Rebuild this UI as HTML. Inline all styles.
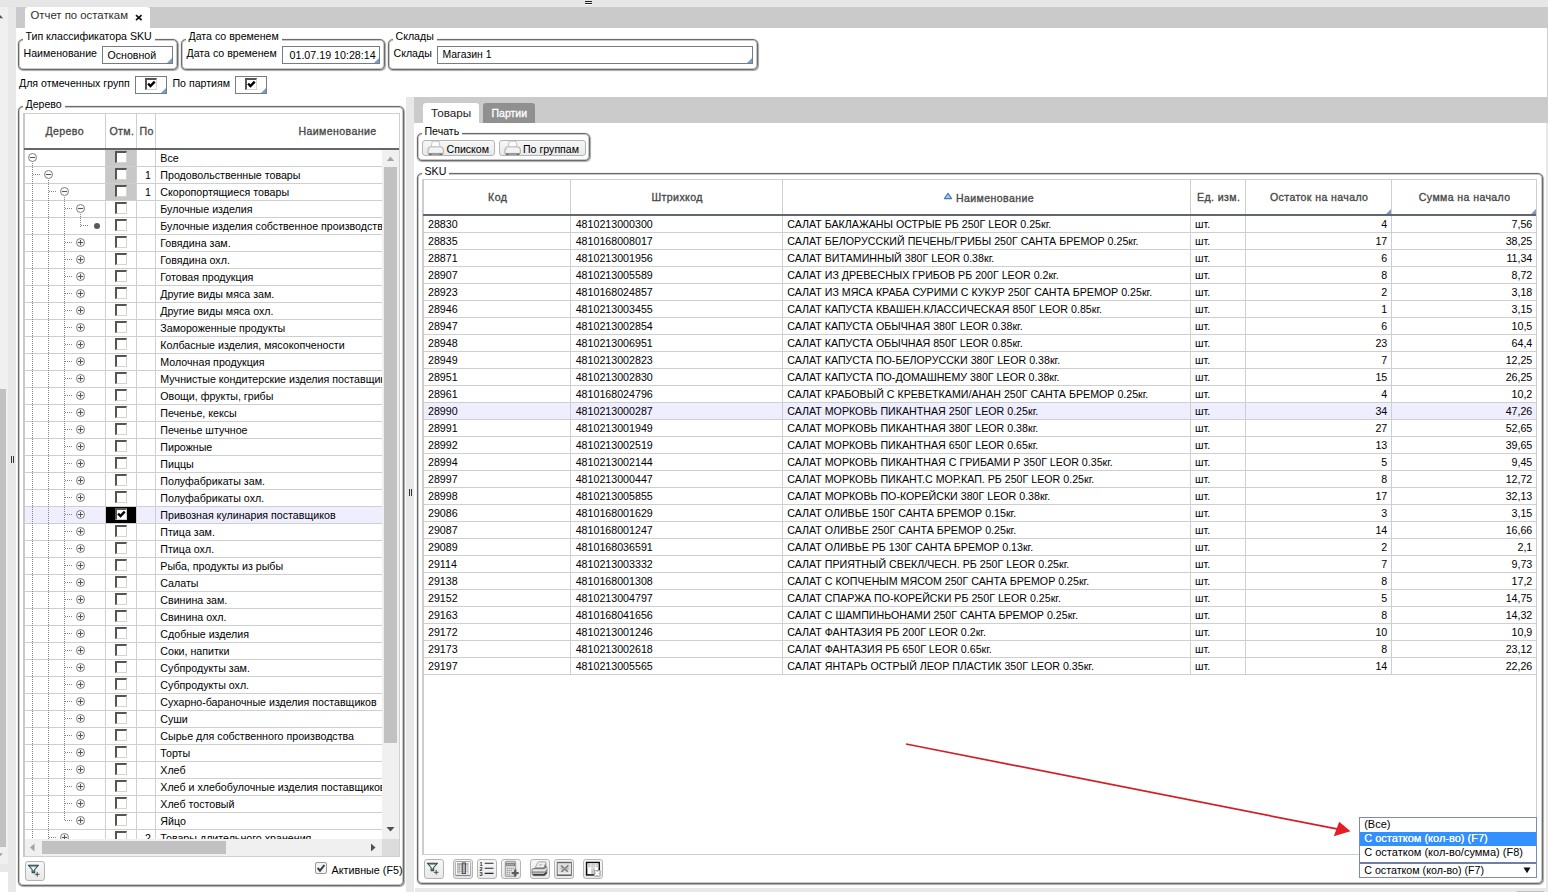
<!DOCTYPE html>
<html lang="ru"><head><meta charset="utf-8"><title>Отчет по остаткам</title><style>
*{box-sizing:border-box;margin:0;padding:0}
html,body{width:1548px;height:892px;overflow:hidden;background:#fff}
body{position:relative;font-family:"Liberation Sans",sans-serif;font-size:10.6px;color:#000;line-height:12px}
.a{position:absolute}
.t{position:absolute;white-space:nowrap;line-height:12px;height:12px}
.fs{position:absolute;border:1px solid #6c6c6c;border-radius:5px;box-shadow:inset 0 0 0 1px rgba(110,110,110,.38),0 0 1px rgba(70,70,70,.8),0.5px 1px 1px rgba(0,0,0,.3)}
.lg{position:absolute;background:#fff;white-space:nowrap;line-height:12px;height:12px;padding:0 3px 0 3px}
.inp{position:absolute;border:1px solid #767c86;background:#fff;overflow:hidden}
.inp:after,.tri:after{content:"";position:absolute;right:0;bottom:0;border-style:solid;border-width:0 0 5px 5px;border-color:transparent transparent #7a9cc8 transparent}
.cb{position:absolute;width:12px;height:12px;background:#fff;border-top:2px solid #555;border-left:2px solid #555;border-right:1px solid #d8d4cc;border-bottom:1px solid #d8d4cc}
.hd{position:absolute;font-weight:normal;color:#484848;-webkit-text-stroke:0.32px #484848;letter-spacing:0.38px;white-space:nowrap;line-height:12px;height:12px;text-align:center}
.vl{position:absolute;width:1px;background:#cfcfcf}
.hl{position:absolute;height:1px;background:#cfcfcf}
.btn{position:absolute;border:1px solid #b4b4b4;border-radius:3px;background:linear-gradient(#f7f7f7,#e9e9e9)}
.tt{font-size:10.66px}
.row{position:absolute;left:0;height:17px;border-bottom:1px solid #cfcfcf}
</style></head><body>
<div class="a" style="left:0px;top:0px;width:1548px;height:7px;background:#e6e6e6;"></div>
<div class="a" style="left:0px;top:7px;width:8px;height:857px;background:#f0f0f0;"></div>
<div class="a" style="left:0px;top:864px;width:8px;height:8px;background:#e8e8e8;"></div>
<div class="a" style="left:8px;top:7px;width:8px;height:885px;background:#e8e8e8;"></div>
<div class="a" style="left:16px;top:7px;width:1532px;height:21px;background:#cacaca;"></div>
<div class="a" style="left:0px;top:389px;width:6px;height:458px;background:#c1c1c1;"></div>
<svg class="a" style="left:0;top:12px" width="8" height="10"><path d="M0 3 L3.2 6.3 L0 6.3Z" fill="#555"/></svg>
<svg class="a" style="left:0;top:852px" width="8" height="8"><path d="M0 1.2 L3 1.2 L0 4.2Z" fill="#a0a0a0"/></svg>
<div class="a" style="left:10.5px;top:456px;width:1px;height:7px;background:#333;"></div>
<div class="a" style="left:13px;top:456px;width:1px;height:7px;background:#333;"></div>
<div class="a" style="left:585px;top:1px;width:7px;height:1px;background:#222;"></div>
<div class="a" style="left:585px;top:3px;width:7px;height:1px;background:#222;"></div>
<div class="a" style="left:585px;top:4px;width:7px;height:1px;background:#fff;"></div>
<div class="a" style="left:25px;top:7px;width:125px;height:21px;background:#fff;border-radius:3px 3px 0 0"></div>
<div class="t" style="left:30.5px;top:9.07px;font-size:11.35px;color:#2e2e2e;">Отчет по остаткам</div>
<svg class="a" style="left:135px;top:14px" width="8" height="8"><path d="M1 1.2 L6.6 6.2 M6.6 1.2 L1 6.2" stroke="#111" stroke-width="1.7" fill="none"/></svg>
<div class="a" style="left:1547px;top:28px;width:1px;height:69px;background:#cfcfcf;"></div>
<div class="a" style="left:1546px;top:123px;width:2px;height:769px;background:#e8e8e8;"></div>
<div class="fs" style="left:18px;top:39px;width:160px;height:31px"></div>
<div class="lg" style="left:22.5px;top:29.50px;">Тип классификатора SKU</div>
<div class="t" style="left:23.5px;top:47.33px;">Наименование</div>
<div class="inp" style="left:102px;top:46px;width:71px;height:18px"></div>
<div class="t" style="left:107.5px;top:49.33px;">Основной</div>
<div class="fs" style="left:181px;top:39px;width:204px;height:31px"></div>
<div class="lg" style="left:185.5px;top:29.50px;">Дата со временем</div>
<div class="t" style="left:186.5px;top:47.33px;">Дата со временем</div>
<div class="inp" style="left:282px;top:46px;width:98px;height:18px"></div>
<div class="t" style="left:289.5px;top:49.29px;font-size:10.7px;">01.07.19 10:28:14</div>
<div class="fs" style="left:388px;top:39px;width:370px;height:31px"></div>
<div class="lg" style="left:392.5px;top:29.50px;">Склады</div>
<div class="t" style="left:393.5px;top:47.33px;">Склады</div>
<div class="inp" style="left:437px;top:46px;width:316px;height:18px"></div>
<div class="t" style="left:442.5px;top:49.38px;font-size:10.45px;">Магазин 1</div>
<div class="t" style="left:19px;top:76.83px;">Для отмеченных групп</div>
<div class="inp" style="left:135px;top:76px;width:32px;height:18px"></div>
<div class="t" style="left:172.5px;top:76.83px;">По партиям</div>
<div class="inp" style="left:235px;top:76px;width:32px;height:18px"></div>
<div class="cb" style="left:145px;top:78px"></div>
<svg class="a" style="left:147px;top:80px" width="9" height="9"><path d="M1.1 3.7 L3.5 6.1 L7.7 1.7" stroke="#000" stroke-width="2.4" fill="none"/></svg>
<div class="cb" style="left:245px;top:78px"></div>
<svg class="a" style="left:247px;top:80px" width="9" height="9"><path d="M1.1 3.7 L3.5 6.1 L7.7 1.7" stroke="#000" stroke-width="2.4" fill="none"/></svg>
<div class="fs" style="left:18px;top:106px;width:386px;height:780px"></div>
<div class="lg" style="left:22.5px;top:98.00px;">Дерево</div>
<div class="a" style="left:24px;top:113px;width:376px;height:1px;background:#cfcfcf;"></div>
<div class="a" style="left:23px;top:113px;width:2px;height:744px;background:#c9c9c9;"></div>
<div class="a" style="left:399px;top:113px;width:1px;height:744px;background:#cfcfcf;"></div>
<div class="a" style="left:24px;top:856px;width:376px;height:1px;background:#cfcfcf;"></div>
<div class="a" style="left:105px;top:114px;width:1px;height:34px;background:#cfcfcf;"></div>
<div class="a" style="left:136px;top:114px;width:1px;height:34px;background:#cfcfcf;"></div>
<div class="a" style="left:155px;top:114px;width:1px;height:34px;background:#cfcfcf;"></div>
<div class="a" style="left:24px;top:148px;width:375px;height:2px;background:#63676d;"></div>
<div class="hd" style="left:45.5px;top:124.83px;">Дерево</div>
<div class="hd" style="left:109.5px;top:124.83px;">Отм.</div>
<div class="hd" style="left:139.5px;top:124.83px;">По</div>
<div class="hd" style="left:298.5px;top:124.83px;">Наименование</div>
<div class="a" style="left:25px;top:150px;width:357px;height:689px;overflow:hidden">
<div class="row" style="top:0px;width:357px;background:transparent"></div>
<div class="a" style="left:81px;top:0px;width:30px;height:16px;background:#c8c8c8"></div>
<div class="row" style="top:17px;width:357px;background:transparent"></div>
<div class="a" style="left:81px;top:17px;width:30px;height:16px;background:#c8c8c8"></div>
<div class="row" style="top:34px;width:357px;background:transparent"></div>
<div class="a" style="left:81px;top:34px;width:30px;height:16px;background:#c8c8c8"></div>
<div class="row" style="top:51px;width:357px;background:transparent"></div>
<div class="row" style="top:68px;width:357px;background:transparent"></div>
<div class="row" style="top:85px;width:357px;background:transparent"></div>
<div class="row" style="top:102px;width:357px;background:transparent"></div>
<div class="row" style="top:119px;width:357px;background:transparent"></div>
<div class="row" style="top:136px;width:357px;background:transparent"></div>
<div class="row" style="top:153px;width:357px;background:transparent"></div>
<div class="row" style="top:170px;width:357px;background:transparent"></div>
<div class="row" style="top:187px;width:357px;background:transparent"></div>
<div class="row" style="top:204px;width:357px;background:transparent"></div>
<div class="row" style="top:221px;width:357px;background:transparent"></div>
<div class="row" style="top:238px;width:357px;background:transparent"></div>
<div class="row" style="top:255px;width:357px;background:transparent"></div>
<div class="row" style="top:272px;width:357px;background:transparent"></div>
<div class="row" style="top:289px;width:357px;background:transparent"></div>
<div class="row" style="top:306px;width:357px;background:transparent"></div>
<div class="row" style="top:323px;width:357px;background:transparent"></div>
<div class="row" style="top:340px;width:357px;background:transparent"></div>
<div class="row" style="top:357px;width:357px;background:#eeeeff"></div>
<div class="a" style="left:81px;top:357px;width:30px;height:16px;background:#000"></div>
<div class="row" style="top:374px;width:357px;background:transparent"></div>
<div class="row" style="top:391px;width:357px;background:transparent"></div>
<div class="row" style="top:408px;width:357px;background:transparent"></div>
<div class="row" style="top:425px;width:357px;background:transparent"></div>
<div class="row" style="top:442px;width:357px;background:transparent"></div>
<div class="row" style="top:459px;width:357px;background:transparent"></div>
<div class="row" style="top:476px;width:357px;background:transparent"></div>
<div class="row" style="top:493px;width:357px;background:transparent"></div>
<div class="row" style="top:510px;width:357px;background:transparent"></div>
<div class="row" style="top:527px;width:357px;background:transparent"></div>
<div class="row" style="top:544px;width:357px;background:transparent"></div>
<div class="row" style="top:561px;width:357px;background:transparent"></div>
<div class="row" style="top:578px;width:357px;background:transparent"></div>
<div class="row" style="top:595px;width:357px;background:transparent"></div>
<div class="row" style="top:612px;width:357px;background:transparent"></div>
<div class="row" style="top:629px;width:357px;background:transparent"></div>
<div class="row" style="top:646px;width:357px;background:transparent"></div>
<div class="row" style="top:663px;width:357px;background:transparent"></div>
<div class="row" style="top:680px;width:357px;background:transparent"></div>
<div class="vl" style="left:80px;top:0;height:689px"></div>
<div class="vl" style="left:111px;top:0;height:689px"></div>
<div class="vl" style="left:130px;top:0;height:689px"></div>
<div class="a" style="left:7.0px;top:13px;width:1px;height:680px;background-image:linear-gradient(#858585 50%,transparent 50%);background-size:1px 2px"></div>
<div class="a" style="left:23.0px;top:30px;width:1px;height:680px;background-image:linear-gradient(#858585 50%,transparent 50%);background-size:1px 2px"></div>
<div class="a" style="left:39.0px;top:47px;width:1px;height:624px;background-image:linear-gradient(#858585 50%,transparent 50%);background-size:1px 2px"></div>
<div class="a" style="left:55.0px;top:64px;width:1px;height:13px;background-image:linear-gradient(#858585 50%,transparent 50%);background-size:1px 2px"></div>
<svg class="a" style="left:2.0px;top:2.0px" width="11" height="11"><circle cx="5.5" cy="5.5" r="4.0" fill="#fff" stroke="#7c7c7c" stroke-width="1"/><path d="M2.8 5.5 H8.2" stroke="#555" stroke-width="1.1"/></svg>
<div class="cb" style="left:90px;top:1px"></div>
<div class="t tt" style="left:135.3px;top:2.03px">Все</div>
<div class="a" style="left:7.5px;top:24px;width:8.5px;height:1px;background-image:linear-gradient(90deg,#858585 50%,transparent 50%);background-size:2px 1px"></div>
<svg class="a" style="left:18.0px;top:19.0px" width="11" height="11"><circle cx="5.5" cy="5.5" r="4.0" fill="#fff" stroke="#7c7c7c" stroke-width="1"/><path d="M2.8 5.5 H8.2" stroke="#555" stroke-width="1.1"/></svg>
<div class="cb" style="left:90px;top:18px"></div>
<div class="t" style="left:112px;width:14px;text-align:right;top:19.33px">1</div>
<div class="t tt" style="left:135.3px;top:19.03px">Продовольственные товары</div>
<div class="a" style="left:23.5px;top:41px;width:8.5px;height:1px;background-image:linear-gradient(90deg,#858585 50%,transparent 50%);background-size:2px 1px"></div>
<svg class="a" style="left:34.0px;top:36.0px" width="11" height="11"><circle cx="5.5" cy="5.5" r="4.0" fill="#fff" stroke="#7c7c7c" stroke-width="1"/><path d="M2.8 5.5 H8.2" stroke="#555" stroke-width="1.1"/></svg>
<div class="cb" style="left:90px;top:35px"></div>
<div class="t" style="left:112px;width:14px;text-align:right;top:36.33px">1</div>
<div class="t tt" style="left:135.3px;top:36.03px">Скоропортящиеся товары</div>
<div class="a" style="left:39.5px;top:58px;width:8.5px;height:1px;background-image:linear-gradient(90deg,#858585 50%,transparent 50%);background-size:2px 1px"></div>
<svg class="a" style="left:50.0px;top:53.0px" width="11" height="11"><circle cx="5.5" cy="5.5" r="4.0" fill="#fff" stroke="#7c7c7c" stroke-width="1"/><path d="M2.8 5.5 H8.2" stroke="#555" stroke-width="1.1"/></svg>
<div class="cb" style="left:90px;top:52px"></div>
<div class="t tt" style="left:135.3px;top:53.03px">Булочные изделия</div>
<div class="a" style="left:55.5px;top:75px;width:8.5px;height:1px;background-image:linear-gradient(90deg,#858585 50%,transparent 50%);background-size:2px 1px"></div>
<svg class="a" style="left:67.5px;top:71.5px" width="8" height="8"><circle cx="4" cy="4" r="3" fill="#585858"/></svg>
<div class="cb" style="left:90px;top:69px"></div>
<div class="t tt" style="left:135.3px;top:70.03px">Булочные изделия собственное производство</div>
<div class="a" style="left:39.5px;top:92px;width:8.5px;height:1px;background-image:linear-gradient(90deg,#858585 50%,transparent 50%);background-size:2px 1px"></div>
<svg class="a" style="left:50.0px;top:87.0px" width="11" height="11"><circle cx="5.5" cy="5.5" r="4.0" fill="#fff" stroke="#7c7c7c" stroke-width="1"/><path d="M2.8 5.5 H8.2" stroke="#555" stroke-width="1.1"/><path d="M5.5 2.8 V8.2" stroke="#555" stroke-width="1.1"/></svg>
<div class="cb" style="left:90px;top:86px"></div>
<div class="t tt" style="left:135.3px;top:87.03px">Говядина зам.</div>
<div class="a" style="left:39.5px;top:109px;width:8.5px;height:1px;background-image:linear-gradient(90deg,#858585 50%,transparent 50%);background-size:2px 1px"></div>
<svg class="a" style="left:50.0px;top:104.0px" width="11" height="11"><circle cx="5.5" cy="5.5" r="4.0" fill="#fff" stroke="#7c7c7c" stroke-width="1"/><path d="M2.8 5.5 H8.2" stroke="#555" stroke-width="1.1"/><path d="M5.5 2.8 V8.2" stroke="#555" stroke-width="1.1"/></svg>
<div class="cb" style="left:90px;top:103px"></div>
<div class="t tt" style="left:135.3px;top:104.03px">Говядина охл.</div>
<div class="a" style="left:39.5px;top:126px;width:8.5px;height:1px;background-image:linear-gradient(90deg,#858585 50%,transparent 50%);background-size:2px 1px"></div>
<svg class="a" style="left:50.0px;top:121.0px" width="11" height="11"><circle cx="5.5" cy="5.5" r="4.0" fill="#fff" stroke="#7c7c7c" stroke-width="1"/><path d="M2.8 5.5 H8.2" stroke="#555" stroke-width="1.1"/><path d="M5.5 2.8 V8.2" stroke="#555" stroke-width="1.1"/></svg>
<div class="cb" style="left:90px;top:120px"></div>
<div class="t tt" style="left:135.3px;top:121.03px">Готовая продукция</div>
<div class="a" style="left:39.5px;top:143px;width:8.5px;height:1px;background-image:linear-gradient(90deg,#858585 50%,transparent 50%);background-size:2px 1px"></div>
<svg class="a" style="left:50.0px;top:138.0px" width="11" height="11"><circle cx="5.5" cy="5.5" r="4.0" fill="#fff" stroke="#7c7c7c" stroke-width="1"/><path d="M2.8 5.5 H8.2" stroke="#555" stroke-width="1.1"/><path d="M5.5 2.8 V8.2" stroke="#555" stroke-width="1.1"/></svg>
<div class="cb" style="left:90px;top:137px"></div>
<div class="t tt" style="left:135.3px;top:138.03px">Другие виды мяса зам.</div>
<div class="a" style="left:39.5px;top:160px;width:8.5px;height:1px;background-image:linear-gradient(90deg,#858585 50%,transparent 50%);background-size:2px 1px"></div>
<svg class="a" style="left:50.0px;top:155.0px" width="11" height="11"><circle cx="5.5" cy="5.5" r="4.0" fill="#fff" stroke="#7c7c7c" stroke-width="1"/><path d="M2.8 5.5 H8.2" stroke="#555" stroke-width="1.1"/><path d="M5.5 2.8 V8.2" stroke="#555" stroke-width="1.1"/></svg>
<div class="cb" style="left:90px;top:154px"></div>
<div class="t tt" style="left:135.3px;top:155.03px">Другие виды мяса охл.</div>
<div class="a" style="left:39.5px;top:177px;width:8.5px;height:1px;background-image:linear-gradient(90deg,#858585 50%,transparent 50%);background-size:2px 1px"></div>
<svg class="a" style="left:50.0px;top:172.0px" width="11" height="11"><circle cx="5.5" cy="5.5" r="4.0" fill="#fff" stroke="#7c7c7c" stroke-width="1"/><path d="M2.8 5.5 H8.2" stroke="#555" stroke-width="1.1"/><path d="M5.5 2.8 V8.2" stroke="#555" stroke-width="1.1"/></svg>
<div class="cb" style="left:90px;top:171px"></div>
<div class="t tt" style="left:135.3px;top:172.03px">Замороженные продукты</div>
<div class="a" style="left:39.5px;top:194px;width:8.5px;height:1px;background-image:linear-gradient(90deg,#858585 50%,transparent 50%);background-size:2px 1px"></div>
<svg class="a" style="left:50.0px;top:189.0px" width="11" height="11"><circle cx="5.5" cy="5.5" r="4.0" fill="#fff" stroke="#7c7c7c" stroke-width="1"/><path d="M2.8 5.5 H8.2" stroke="#555" stroke-width="1.1"/><path d="M5.5 2.8 V8.2" stroke="#555" stroke-width="1.1"/></svg>
<div class="cb" style="left:90px;top:188px"></div>
<div class="t tt" style="left:135.3px;top:189.03px">Колбасные изделия, мясокопчености</div>
<div class="a" style="left:39.5px;top:211px;width:8.5px;height:1px;background-image:linear-gradient(90deg,#858585 50%,transparent 50%);background-size:2px 1px"></div>
<svg class="a" style="left:50.0px;top:206.0px" width="11" height="11"><circle cx="5.5" cy="5.5" r="4.0" fill="#fff" stroke="#7c7c7c" stroke-width="1"/><path d="M2.8 5.5 H8.2" stroke="#555" stroke-width="1.1"/><path d="M5.5 2.8 V8.2" stroke="#555" stroke-width="1.1"/></svg>
<div class="cb" style="left:90px;top:205px"></div>
<div class="t tt" style="left:135.3px;top:206.03px">Молочная продукция</div>
<div class="a" style="left:39.5px;top:228px;width:8.5px;height:1px;background-image:linear-gradient(90deg,#858585 50%,transparent 50%);background-size:2px 1px"></div>
<svg class="a" style="left:50.0px;top:223.0px" width="11" height="11"><circle cx="5.5" cy="5.5" r="4.0" fill="#fff" stroke="#7c7c7c" stroke-width="1"/><path d="M2.8 5.5 H8.2" stroke="#555" stroke-width="1.1"/><path d="M5.5 2.8 V8.2" stroke="#555" stroke-width="1.1"/></svg>
<div class="cb" style="left:90px;top:222px"></div>
<div class="t tt" style="left:135.3px;top:223.03px">Мучнистые кондитерские изделия поставщиков</div>
<div class="a" style="left:39.5px;top:245px;width:8.5px;height:1px;background-image:linear-gradient(90deg,#858585 50%,transparent 50%);background-size:2px 1px"></div>
<svg class="a" style="left:50.0px;top:240.0px" width="11" height="11"><circle cx="5.5" cy="5.5" r="4.0" fill="#fff" stroke="#7c7c7c" stroke-width="1"/><path d="M2.8 5.5 H8.2" stroke="#555" stroke-width="1.1"/><path d="M5.5 2.8 V8.2" stroke="#555" stroke-width="1.1"/></svg>
<div class="cb" style="left:90px;top:239px"></div>
<div class="t tt" style="left:135.3px;top:240.03px">Овощи, фрукты, грибы</div>
<div class="a" style="left:39.5px;top:262px;width:8.5px;height:1px;background-image:linear-gradient(90deg,#858585 50%,transparent 50%);background-size:2px 1px"></div>
<svg class="a" style="left:50.0px;top:257.0px" width="11" height="11"><circle cx="5.5" cy="5.5" r="4.0" fill="#fff" stroke="#7c7c7c" stroke-width="1"/><path d="M2.8 5.5 H8.2" stroke="#555" stroke-width="1.1"/><path d="M5.5 2.8 V8.2" stroke="#555" stroke-width="1.1"/></svg>
<div class="cb" style="left:90px;top:256px"></div>
<div class="t tt" style="left:135.3px;top:257.03px">Печенье, кексы</div>
<div class="a" style="left:39.5px;top:279px;width:8.5px;height:1px;background-image:linear-gradient(90deg,#858585 50%,transparent 50%);background-size:2px 1px"></div>
<svg class="a" style="left:50.0px;top:274.0px" width="11" height="11"><circle cx="5.5" cy="5.5" r="4.0" fill="#fff" stroke="#7c7c7c" stroke-width="1"/><path d="M2.8 5.5 H8.2" stroke="#555" stroke-width="1.1"/><path d="M5.5 2.8 V8.2" stroke="#555" stroke-width="1.1"/></svg>
<div class="cb" style="left:90px;top:273px"></div>
<div class="t tt" style="left:135.3px;top:274.03px">Печенье штучное</div>
<div class="a" style="left:39.5px;top:296px;width:8.5px;height:1px;background-image:linear-gradient(90deg,#858585 50%,transparent 50%);background-size:2px 1px"></div>
<svg class="a" style="left:50.0px;top:291.0px" width="11" height="11"><circle cx="5.5" cy="5.5" r="4.0" fill="#fff" stroke="#7c7c7c" stroke-width="1"/><path d="M2.8 5.5 H8.2" stroke="#555" stroke-width="1.1"/><path d="M5.5 2.8 V8.2" stroke="#555" stroke-width="1.1"/></svg>
<div class="cb" style="left:90px;top:290px"></div>
<div class="t tt" style="left:135.3px;top:291.03px">Пирожные</div>
<div class="a" style="left:39.5px;top:313px;width:8.5px;height:1px;background-image:linear-gradient(90deg,#858585 50%,transparent 50%);background-size:2px 1px"></div>
<svg class="a" style="left:50.0px;top:308.0px" width="11" height="11"><circle cx="5.5" cy="5.5" r="4.0" fill="#fff" stroke="#7c7c7c" stroke-width="1"/><path d="M2.8 5.5 H8.2" stroke="#555" stroke-width="1.1"/><path d="M5.5 2.8 V8.2" stroke="#555" stroke-width="1.1"/></svg>
<div class="cb" style="left:90px;top:307px"></div>
<div class="t tt" style="left:135.3px;top:308.03px">Пиццы</div>
<div class="a" style="left:39.5px;top:330px;width:8.5px;height:1px;background-image:linear-gradient(90deg,#858585 50%,transparent 50%);background-size:2px 1px"></div>
<svg class="a" style="left:50.0px;top:325.0px" width="11" height="11"><circle cx="5.5" cy="5.5" r="4.0" fill="#fff" stroke="#7c7c7c" stroke-width="1"/><path d="M2.8 5.5 H8.2" stroke="#555" stroke-width="1.1"/><path d="M5.5 2.8 V8.2" stroke="#555" stroke-width="1.1"/></svg>
<div class="cb" style="left:90px;top:324px"></div>
<div class="t tt" style="left:135.3px;top:325.03px">Полуфабрикаты зам.</div>
<div class="a" style="left:39.5px;top:347px;width:8.5px;height:1px;background-image:linear-gradient(90deg,#858585 50%,transparent 50%);background-size:2px 1px"></div>
<svg class="a" style="left:50.0px;top:342.0px" width="11" height="11"><circle cx="5.5" cy="5.5" r="4.0" fill="#fff" stroke="#7c7c7c" stroke-width="1"/><path d="M2.8 5.5 H8.2" stroke="#555" stroke-width="1.1"/><path d="M5.5 2.8 V8.2" stroke="#555" stroke-width="1.1"/></svg>
<div class="cb" style="left:90px;top:341px"></div>
<div class="t tt" style="left:135.3px;top:342.03px">Полуфабрикаты охл.</div>
<div class="a" style="left:39.5px;top:364px;width:8.5px;height:1px;background-image:linear-gradient(90deg,#858585 50%,transparent 50%);background-size:2px 1px"></div>
<svg class="a" style="left:50.0px;top:359.0px" width="11" height="11"><circle cx="5.5" cy="5.5" r="4.0" fill="#fff" stroke="#7c7c7c" stroke-width="1"/><path d="M2.8 5.5 H8.2" stroke="#555" stroke-width="1.1"/><path d="M5.5 2.8 V8.2" stroke="#555" stroke-width="1.1"/></svg>
<div class="cb" style="left:90px;top:358px"></div>
<svg class="a" style="left:92px;top:360px" width="9" height="9"><path d="M1.1 3.7 L3.5 6.1 L7.7 1.7" stroke="#000" stroke-width="2.4" fill="none"/></svg>
<div class="t tt" style="left:135.3px;top:359.03px">Привозная кулинария поставщиков</div>
<div class="a" style="left:39.5px;top:381px;width:8.5px;height:1px;background-image:linear-gradient(90deg,#858585 50%,transparent 50%);background-size:2px 1px"></div>
<svg class="a" style="left:50.0px;top:376.0px" width="11" height="11"><circle cx="5.5" cy="5.5" r="4.0" fill="#fff" stroke="#7c7c7c" stroke-width="1"/><path d="M2.8 5.5 H8.2" stroke="#555" stroke-width="1.1"/><path d="M5.5 2.8 V8.2" stroke="#555" stroke-width="1.1"/></svg>
<div class="cb" style="left:90px;top:375px"></div>
<div class="t tt" style="left:135.3px;top:376.03px">Птица зам.</div>
<div class="a" style="left:39.5px;top:398px;width:8.5px;height:1px;background-image:linear-gradient(90deg,#858585 50%,transparent 50%);background-size:2px 1px"></div>
<svg class="a" style="left:50.0px;top:393.0px" width="11" height="11"><circle cx="5.5" cy="5.5" r="4.0" fill="#fff" stroke="#7c7c7c" stroke-width="1"/><path d="M2.8 5.5 H8.2" stroke="#555" stroke-width="1.1"/><path d="M5.5 2.8 V8.2" stroke="#555" stroke-width="1.1"/></svg>
<div class="cb" style="left:90px;top:392px"></div>
<div class="t tt" style="left:135.3px;top:393.03px">Птица охл.</div>
<div class="a" style="left:39.5px;top:415px;width:8.5px;height:1px;background-image:linear-gradient(90deg,#858585 50%,transparent 50%);background-size:2px 1px"></div>
<svg class="a" style="left:50.0px;top:410.0px" width="11" height="11"><circle cx="5.5" cy="5.5" r="4.0" fill="#fff" stroke="#7c7c7c" stroke-width="1"/><path d="M2.8 5.5 H8.2" stroke="#555" stroke-width="1.1"/><path d="M5.5 2.8 V8.2" stroke="#555" stroke-width="1.1"/></svg>
<div class="cb" style="left:90px;top:409px"></div>
<div class="t tt" style="left:135.3px;top:410.03px">Рыба, продукты из рыбы</div>
<div class="a" style="left:39.5px;top:432px;width:8.5px;height:1px;background-image:linear-gradient(90deg,#858585 50%,transparent 50%);background-size:2px 1px"></div>
<svg class="a" style="left:50.0px;top:427.0px" width="11" height="11"><circle cx="5.5" cy="5.5" r="4.0" fill="#fff" stroke="#7c7c7c" stroke-width="1"/><path d="M2.8 5.5 H8.2" stroke="#555" stroke-width="1.1"/><path d="M5.5 2.8 V8.2" stroke="#555" stroke-width="1.1"/></svg>
<div class="cb" style="left:90px;top:426px"></div>
<div class="t tt" style="left:135.3px;top:427.03px">Салаты</div>
<div class="a" style="left:39.5px;top:449px;width:8.5px;height:1px;background-image:linear-gradient(90deg,#858585 50%,transparent 50%);background-size:2px 1px"></div>
<svg class="a" style="left:50.0px;top:444.0px" width="11" height="11"><circle cx="5.5" cy="5.5" r="4.0" fill="#fff" stroke="#7c7c7c" stroke-width="1"/><path d="M2.8 5.5 H8.2" stroke="#555" stroke-width="1.1"/><path d="M5.5 2.8 V8.2" stroke="#555" stroke-width="1.1"/></svg>
<div class="cb" style="left:90px;top:443px"></div>
<div class="t tt" style="left:135.3px;top:444.03px">Свинина зам.</div>
<div class="a" style="left:39.5px;top:466px;width:8.5px;height:1px;background-image:linear-gradient(90deg,#858585 50%,transparent 50%);background-size:2px 1px"></div>
<svg class="a" style="left:50.0px;top:461.0px" width="11" height="11"><circle cx="5.5" cy="5.5" r="4.0" fill="#fff" stroke="#7c7c7c" stroke-width="1"/><path d="M2.8 5.5 H8.2" stroke="#555" stroke-width="1.1"/><path d="M5.5 2.8 V8.2" stroke="#555" stroke-width="1.1"/></svg>
<div class="cb" style="left:90px;top:460px"></div>
<div class="t tt" style="left:135.3px;top:461.03px">Свинина охл.</div>
<div class="a" style="left:39.5px;top:483px;width:8.5px;height:1px;background-image:linear-gradient(90deg,#858585 50%,transparent 50%);background-size:2px 1px"></div>
<svg class="a" style="left:50.0px;top:478.0px" width="11" height="11"><circle cx="5.5" cy="5.5" r="4.0" fill="#fff" stroke="#7c7c7c" stroke-width="1"/><path d="M2.8 5.5 H8.2" stroke="#555" stroke-width="1.1"/><path d="M5.5 2.8 V8.2" stroke="#555" stroke-width="1.1"/></svg>
<div class="cb" style="left:90px;top:477px"></div>
<div class="t tt" style="left:135.3px;top:478.03px">Сдобные изделия</div>
<div class="a" style="left:39.5px;top:500px;width:8.5px;height:1px;background-image:linear-gradient(90deg,#858585 50%,transparent 50%);background-size:2px 1px"></div>
<svg class="a" style="left:50.0px;top:495.0px" width="11" height="11"><circle cx="5.5" cy="5.5" r="4.0" fill="#fff" stroke="#7c7c7c" stroke-width="1"/><path d="M2.8 5.5 H8.2" stroke="#555" stroke-width="1.1"/><path d="M5.5 2.8 V8.2" stroke="#555" stroke-width="1.1"/></svg>
<div class="cb" style="left:90px;top:494px"></div>
<div class="t tt" style="left:135.3px;top:495.03px">Соки, напитки</div>
<div class="a" style="left:39.5px;top:517px;width:8.5px;height:1px;background-image:linear-gradient(90deg,#858585 50%,transparent 50%);background-size:2px 1px"></div>
<svg class="a" style="left:50.0px;top:512.0px" width="11" height="11"><circle cx="5.5" cy="5.5" r="4.0" fill="#fff" stroke="#7c7c7c" stroke-width="1"/><path d="M2.8 5.5 H8.2" stroke="#555" stroke-width="1.1"/><path d="M5.5 2.8 V8.2" stroke="#555" stroke-width="1.1"/></svg>
<div class="cb" style="left:90px;top:511px"></div>
<div class="t tt" style="left:135.3px;top:512.03px">Субпродукты зам.</div>
<div class="a" style="left:39.5px;top:534px;width:8.5px;height:1px;background-image:linear-gradient(90deg,#858585 50%,transparent 50%);background-size:2px 1px"></div>
<svg class="a" style="left:50.0px;top:529.0px" width="11" height="11"><circle cx="5.5" cy="5.5" r="4.0" fill="#fff" stroke="#7c7c7c" stroke-width="1"/><path d="M2.8 5.5 H8.2" stroke="#555" stroke-width="1.1"/><path d="M5.5 2.8 V8.2" stroke="#555" stroke-width="1.1"/></svg>
<div class="cb" style="left:90px;top:528px"></div>
<div class="t tt" style="left:135.3px;top:529.03px">Субпродукты охл.</div>
<div class="a" style="left:39.5px;top:551px;width:8.5px;height:1px;background-image:linear-gradient(90deg,#858585 50%,transparent 50%);background-size:2px 1px"></div>
<svg class="a" style="left:50.0px;top:546.0px" width="11" height="11"><circle cx="5.5" cy="5.5" r="4.0" fill="#fff" stroke="#7c7c7c" stroke-width="1"/><path d="M2.8 5.5 H8.2" stroke="#555" stroke-width="1.1"/><path d="M5.5 2.8 V8.2" stroke="#555" stroke-width="1.1"/></svg>
<div class="cb" style="left:90px;top:545px"></div>
<div class="t tt" style="left:135.3px;top:546.03px">Сухарно-бараночные изделия поставщиков</div>
<div class="a" style="left:39.5px;top:568px;width:8.5px;height:1px;background-image:linear-gradient(90deg,#858585 50%,transparent 50%);background-size:2px 1px"></div>
<svg class="a" style="left:50.0px;top:563.0px" width="11" height="11"><circle cx="5.5" cy="5.5" r="4.0" fill="#fff" stroke="#7c7c7c" stroke-width="1"/><path d="M2.8 5.5 H8.2" stroke="#555" stroke-width="1.1"/><path d="M5.5 2.8 V8.2" stroke="#555" stroke-width="1.1"/></svg>
<div class="cb" style="left:90px;top:562px"></div>
<div class="t tt" style="left:135.3px;top:563.03px">Суши</div>
<div class="a" style="left:39.5px;top:585px;width:8.5px;height:1px;background-image:linear-gradient(90deg,#858585 50%,transparent 50%);background-size:2px 1px"></div>
<svg class="a" style="left:50.0px;top:580.0px" width="11" height="11"><circle cx="5.5" cy="5.5" r="4.0" fill="#fff" stroke="#7c7c7c" stroke-width="1"/><path d="M2.8 5.5 H8.2" stroke="#555" stroke-width="1.1"/><path d="M5.5 2.8 V8.2" stroke="#555" stroke-width="1.1"/></svg>
<div class="cb" style="left:90px;top:579px"></div>
<div class="t tt" style="left:135.3px;top:580.03px">Сырье для собственного производства</div>
<div class="a" style="left:39.5px;top:602px;width:8.5px;height:1px;background-image:linear-gradient(90deg,#858585 50%,transparent 50%);background-size:2px 1px"></div>
<svg class="a" style="left:50.0px;top:597.0px" width="11" height="11"><circle cx="5.5" cy="5.5" r="4.0" fill="#fff" stroke="#7c7c7c" stroke-width="1"/><path d="M2.8 5.5 H8.2" stroke="#555" stroke-width="1.1"/><path d="M5.5 2.8 V8.2" stroke="#555" stroke-width="1.1"/></svg>
<div class="cb" style="left:90px;top:596px"></div>
<div class="t tt" style="left:135.3px;top:597.03px">Торты</div>
<div class="a" style="left:39.5px;top:619px;width:8.5px;height:1px;background-image:linear-gradient(90deg,#858585 50%,transparent 50%);background-size:2px 1px"></div>
<svg class="a" style="left:50.0px;top:614.0px" width="11" height="11"><circle cx="5.5" cy="5.5" r="4.0" fill="#fff" stroke="#7c7c7c" stroke-width="1"/><path d="M2.8 5.5 H8.2" stroke="#555" stroke-width="1.1"/><path d="M5.5 2.8 V8.2" stroke="#555" stroke-width="1.1"/></svg>
<div class="cb" style="left:90px;top:613px"></div>
<div class="t tt" style="left:135.3px;top:614.03px">Хлеб</div>
<div class="a" style="left:39.5px;top:636px;width:8.5px;height:1px;background-image:linear-gradient(90deg,#858585 50%,transparent 50%);background-size:2px 1px"></div>
<svg class="a" style="left:50.0px;top:631.0px" width="11" height="11"><circle cx="5.5" cy="5.5" r="4.0" fill="#fff" stroke="#7c7c7c" stroke-width="1"/><path d="M2.8 5.5 H8.2" stroke="#555" stroke-width="1.1"/><path d="M5.5 2.8 V8.2" stroke="#555" stroke-width="1.1"/></svg>
<div class="cb" style="left:90px;top:630px"></div>
<div class="t tt" style="left:135.3px;top:631.03px">Хлеб и хлебобулочные изделия поставщиков</div>
<div class="a" style="left:39.5px;top:653px;width:8.5px;height:1px;background-image:linear-gradient(90deg,#858585 50%,transparent 50%);background-size:2px 1px"></div>
<svg class="a" style="left:50.0px;top:648.0px" width="11" height="11"><circle cx="5.5" cy="5.5" r="4.0" fill="#fff" stroke="#7c7c7c" stroke-width="1"/><path d="M2.8 5.5 H8.2" stroke="#555" stroke-width="1.1"/><path d="M5.5 2.8 V8.2" stroke="#555" stroke-width="1.1"/></svg>
<div class="cb" style="left:90px;top:647px"></div>
<div class="t tt" style="left:135.3px;top:648.03px">Хлеб тостовый</div>
<div class="a" style="left:39.5px;top:670px;width:8.5px;height:1px;background-image:linear-gradient(90deg,#858585 50%,transparent 50%);background-size:2px 1px"></div>
<svg class="a" style="left:50.0px;top:665.0px" width="11" height="11"><circle cx="5.5" cy="5.5" r="4.0" fill="#fff" stroke="#7c7c7c" stroke-width="1"/><path d="M2.8 5.5 H8.2" stroke="#555" stroke-width="1.1"/><path d="M5.5 2.8 V8.2" stroke="#555" stroke-width="1.1"/></svg>
<div class="cb" style="left:90px;top:664px"></div>
<div class="t tt" style="left:135.3px;top:665.03px">Яйцо</div>
<div class="a" style="left:23.5px;top:687px;width:8.5px;height:1px;background-image:linear-gradient(90deg,#858585 50%,transparent 50%);background-size:2px 1px"></div>
<svg class="a" style="left:34.0px;top:682.0px" width="11" height="11"><circle cx="5.5" cy="5.5" r="4.0" fill="#fff" stroke="#7c7c7c" stroke-width="1"/><path d="M2.8 5.5 H8.2" stroke="#555" stroke-width="1.1"/><path d="M5.5 2.8 V8.2" stroke="#555" stroke-width="1.1"/></svg>
<div class="cb" style="left:90px;top:681px"></div>
<div class="t" style="left:112px;width:14px;text-align:right;top:682.33px">2</div>
<div class="t tt" style="left:135.3px;top:682.03px">Товары длительного хранения</div>
</div>
<div class="a" style="left:382px;top:150px;width:17px;height:689px;background:#f0f0f0;"></div>
<div class="a" style="left:384px;top:167px;width:13px;height:576px;background:#c1c1c1;"></div>
<svg class="a" style="left:386px;top:155px" width="9" height="7"><path d="M0.9 6 L4.5 1.6 L8.1 6Z" fill="#a3a3a3"/></svg>
<svg class="a" style="left:386px;top:826px" width="9" height="7"><path d="M0.5 1 L8.5 1 L4.5 5.5Z" fill="#505050"/></svg>
<div class="a" style="left:25px;top:839px;width:374px;height:17px;background:#f0f0f0;"></div>
<div class="a" style="left:41.5px;top:841px;width:184px;height:13px;background:#c1c1c1;"></div>
<svg class="a" style="left:29px;top:843px" width="7" height="9"><path d="M5.5 0.5 L5.5 8.5 L1 4.5Z" fill="#a3a3a3"/></svg>
<svg class="a" style="left:370px;top:843px" width="7" height="9"><path d="M1 0.5 L1 8.5 L5.5 4.5Z" fill="#505050"/></svg>
<div class="a" style="left:382px;top:839px;width:17px;height:17px;background:#dcdcdc;"></div>
<div class="btn" style="left:25px;top:861px;width:20px;height:20px"></div>
<svg class="a" style="left:25.3px;top:861.3px" width="20" height="20" viewBox="0 0 20 20"><path d="M3.3 4.2 H13.5 L9.7 8.5 V11.6 H7.1 V8.5 Z" fill="#f0f7f7" stroke="#2d4a4c" stroke-width="1.05" stroke-linejoin="round"/><path d="M4.3 4.4 H12.5 L11.6 5.5 H5.3Z" fill="#2d4a4c"/><path d="M7.3 9 H9.5 V11.4 H7.3Z" fill="#3f6163"/><path d="M8.4 9.4 V10.2" stroke="#dcecec" stroke-width="0.8"/><path d="M12.2 10.9 V15.7 M9.8 13.3 H14.6" stroke="#3a3a3a" stroke-width="0.9"/></svg>
<div class="a" style="left:315px;top:862px;width:12px;height:12px;border:1px solid #9a9a9a;border-radius:2px;background:#f2f2f2"></div>
<svg class="a" style="left:316px;top:863px" width="10" height="10"><path d="M1.6 5 L4 7.6 L8.4 2" stroke="#3c3c3c" stroke-width="2" fill="none"/></svg>
<div class="t" style="left:331.5px;top:863.76px;font-size:10.78px;">Активные (F5)</div>
<div class="a" style="left:406px;top:97px;width:8px;height:795px;background:#e8e8e8;"></div>
<div class="a" style="left:408.5px;top:489px;width:1px;height:7px;background:#333;"></div>
<div class="a" style="left:411px;top:489px;width:1px;height:7px;background:#333;"></div>
<div class="a" style="left:414px;top:97px;width:1134px;height:25.7px;background:#cbcbcb;"></div>
<div class="a" style="left:423px;top:103px;width:56px;height:20px;background:#fff;border-radius:3px 3px 0 0"></div>
<div class="t" style="left:431px;top:106.65px;font-size:11.7px;color:#222;">Товары</div>
<div class="a" style="left:483px;top:103px;width:52px;height:19.7px;background:#909090;border-radius:3px 3px 0 0"></div>
<div class="t" style="left:491.5px;top:107.06px;font-size:10.5px;color:#fff;-webkit-text-stroke:0.3px #fff;">Партии</div>
<div class="fs" style="left:417px;top:133px;width:173px;height:28px"></div>
<div class="lg" style="left:421.5px;top:124.70px;">Печать</div>
<div class="btn" style="left:422px;top:140px;width:72.5px;height:16px"></div>
<svg class="a" style="left:427.2px;top:140.2px" width="18" height="16" viewBox="0 0 18 16"><path d="M4.2 7 L5.2 1.2 H12 L13 7Z" fill="#fdfdfd" stroke="#b9b9b9" stroke-width="0.8"/><path d="M0.9 13.4 V9.6 Q0.9 6.8 3.8 6.8 H13.4 Q16.3 6.8 16.3 9.6 V13.4Z" fill="#f3f3f3" stroke="#a4a4a4" stroke-width="0.9"/><path d="M4.3 6.9 H12.9" stroke="#d9d9d9" stroke-width="0.8"/><path d="M1.6 14.3 H15.6" stroke="#6a6a6a" stroke-width="1.5"/><path d="M4.6 14.3 H12.6" stroke="#a0a0a0" stroke-width="1.5"/><circle cx="2.6" cy="9.6" r="0.5" fill="#7fbf7f"/></svg>
<div class="t" style="left:446.5px;top:142.83px;">Списком</div>
<div class="btn" style="left:499px;top:140px;width:86.5px;height:16px"></div>
<svg class="a" style="left:504.3px;top:140.2px" width="18" height="16" viewBox="0 0 18 16"><path d="M4.2 7 L5.2 1.2 H12 L13 7Z" fill="#fdfdfd" stroke="#b9b9b9" stroke-width="0.8"/><path d="M0.9 13.4 V9.6 Q0.9 6.8 3.8 6.8 H13.4 Q16.3 6.8 16.3 9.6 V13.4Z" fill="#f3f3f3" stroke="#a4a4a4" stroke-width="0.9"/><path d="M4.3 6.9 H12.9" stroke="#d9d9d9" stroke-width="0.8"/><path d="M1.6 14.3 H15.6" stroke="#6a6a6a" stroke-width="1.5"/><path d="M4.6 14.3 H12.6" stroke="#a0a0a0" stroke-width="1.5"/><circle cx="2.6" cy="9.6" r="0.5" fill="#7fbf7f"/></svg>
<div class="t" style="left:523px;top:142.83px;">По группам</div>
<div class="fs" style="left:417px;top:173px;width:1125.5px;height:710.5px"></div>
<div class="lg" style="left:421.5px;top:164.70px;">SKU</div>
<div class="a" style="left:423px;top:179px;width:1114px;height:1px;background:#cfcfcf;"></div>
<div class="a" style="left:422px;top:179px;width:2px;height:676px;background:#cdcdcd;"></div>
<div class="a" style="left:1536px;top:179px;width:1px;height:676px;background:#cfcfcf;"></div>
<div class="a" style="left:423px;top:854px;width:1114px;height:1px;background:#cfcfcf;"></div>
<div class="a" style="left:570px;top:180px;width:1px;height:495px;background:#cfcfcf;"></div>
<div class="a" style="left:782px;top:180px;width:1px;height:495px;background:#cfcfcf;"></div>
<div class="a" style="left:1190px;top:180px;width:1px;height:495px;background:#cfcfcf;"></div>
<div class="a" style="left:1245px;top:180px;width:1px;height:495px;background:#cfcfcf;"></div>
<div class="a" style="left:1391px;top:180px;width:1px;height:495px;background:#cfcfcf;"></div>
<div class="a" style="left:423px;top:214px;width:1113px;height:2px;background:#63676d;"></div>
<div class="hd" style="left:424.2px;width:147px;top:190.83px">Код</div>
<div class="hd" style="left:571.2px;width:212px;top:190.83px">Штрихкод</div>
<svg class="a" style="left:943px;top:192px" width="10" height="8"><path d="M1.4 6.6 L5 1.4 L8.6 6.6Z" fill="#a9c8fb" stroke="#4a76bd" stroke-width="1.1" stroke-linejoin="round"/></svg>
<div class="hd" style="left:956px;top:191.83px;">Наименование</div>
<div class="hd" style="left:1191.2px;width:55px;top:190.83px">Ед. изм.</div>
<div class="hd" style="left:1246.2px;width:146px;top:190.83px">Остаток на начало</div>
<div class="hd" style="left:1392.2px;width:145px;top:190.83px">Сумма на начало</div>
<div class="a" style="left:1386px;top:209px;border-style:solid;border-width:0 0 5px 5px;border-color:transparent transparent #7a9cc8 transparent"></div>
<div class="a" style="left:1531px;top:209px;border-style:solid;border-width:0 0 5px 5px;border-color:transparent transparent #7a9cc8 transparent"></div>
<div class="a" style="left:424px;top:232px;width:1112px;height:1px;background:#cfcfcf;"></div>
<div class="t tt" style="left:428px;top:218.33px">28830</div>
<div class="t tt" style="left:575.7px;top:218.33px">4810213000300</div>
<div class="t tt" style="left:787.2px;top:218.33px">САЛАТ БАКЛАЖАНЫ ОСТРЫЕ РБ 250Г LEOR 0.25кг.</div>
<div class="t tt" style="left:1195px;top:218.33px">шт.</div>
<div class="t tt" style="left:1300px;width:87.3px;text-align:right;top:218.33px">4</div>
<div class="t tt" style="left:1440px;width:92.3px;text-align:right;top:218.33px">7,56</div>
<div class="a" style="left:424px;top:249px;width:1112px;height:1px;background:#cfcfcf;"></div>
<div class="t tt" style="left:428px;top:235.33px">28835</div>
<div class="t tt" style="left:575.7px;top:235.33px">4810168008017</div>
<div class="t tt" style="left:787.2px;top:235.33px">САЛАТ БЕЛОРУССКИЙ ПЕЧЕНЬ/ГРИБЫ 250Г САНТА БРЕМОР 0.25кг.</div>
<div class="t tt" style="left:1195px;top:235.33px">шт.</div>
<div class="t tt" style="left:1300px;width:87.3px;text-align:right;top:235.33px">17</div>
<div class="t tt" style="left:1440px;width:92.3px;text-align:right;top:235.33px">38,25</div>
<div class="a" style="left:424px;top:266px;width:1112px;height:1px;background:#cfcfcf;"></div>
<div class="t tt" style="left:428px;top:252.33px">28871</div>
<div class="t tt" style="left:575.7px;top:252.33px">4810213001956</div>
<div class="t tt" style="left:787.2px;top:252.33px">САЛАТ ВИТАМИННЫЙ 380Г LEOR 0.38кг.</div>
<div class="t tt" style="left:1195px;top:252.33px">шт.</div>
<div class="t tt" style="left:1300px;width:87.3px;text-align:right;top:252.33px">6</div>
<div class="t tt" style="left:1440px;width:92.3px;text-align:right;top:252.33px">11,34</div>
<div class="a" style="left:424px;top:283px;width:1112px;height:1px;background:#cfcfcf;"></div>
<div class="t tt" style="left:428px;top:269.33px">28907</div>
<div class="t tt" style="left:575.7px;top:269.33px">4810213005589</div>
<div class="t tt" style="left:787.2px;top:269.33px">САЛАТ ИЗ ДРЕВЕСНЫХ ГРИБОВ РБ 200Г LEOR 0.2кг.</div>
<div class="t tt" style="left:1195px;top:269.33px">шт.</div>
<div class="t tt" style="left:1300px;width:87.3px;text-align:right;top:269.33px">8</div>
<div class="t tt" style="left:1440px;width:92.3px;text-align:right;top:269.33px">8,72</div>
<div class="a" style="left:424px;top:300px;width:1112px;height:1px;background:#cfcfcf;"></div>
<div class="t tt" style="left:428px;top:286.33px">28923</div>
<div class="t tt" style="left:575.7px;top:286.33px">4810168024857</div>
<div class="t tt" style="left:787.2px;top:286.33px">САЛАТ ИЗ МЯСА КРАБА СУРИМИ С КУКУР 250Г САНТА БРЕМОР 0.25кг.</div>
<div class="t tt" style="left:1195px;top:286.33px">шт.</div>
<div class="t tt" style="left:1300px;width:87.3px;text-align:right;top:286.33px">2</div>
<div class="t tt" style="left:1440px;width:92.3px;text-align:right;top:286.33px">3,18</div>
<div class="a" style="left:424px;top:317px;width:1112px;height:1px;background:#cfcfcf;"></div>
<div class="t tt" style="left:428px;top:303.33px">28946</div>
<div class="t tt" style="left:575.7px;top:303.33px">4810213003455</div>
<div class="t tt" style="left:787.2px;top:303.33px">САЛАТ КАПУСТА КВАШЕН.КЛАССИЧЕСКАЯ 850Г LEOR 0.85кг.</div>
<div class="t tt" style="left:1195px;top:303.33px">шт.</div>
<div class="t tt" style="left:1300px;width:87.3px;text-align:right;top:303.33px">1</div>
<div class="t tt" style="left:1440px;width:92.3px;text-align:right;top:303.33px">3,15</div>
<div class="a" style="left:424px;top:334px;width:1112px;height:1px;background:#cfcfcf;"></div>
<div class="t tt" style="left:428px;top:320.33px">28947</div>
<div class="t tt" style="left:575.7px;top:320.33px">4810213002854</div>
<div class="t tt" style="left:787.2px;top:320.33px">САЛАТ КАПУСТА ОБЫЧНАЯ 380Г LEOR 0.38кг.</div>
<div class="t tt" style="left:1195px;top:320.33px">шт.</div>
<div class="t tt" style="left:1300px;width:87.3px;text-align:right;top:320.33px">6</div>
<div class="t tt" style="left:1440px;width:92.3px;text-align:right;top:320.33px">10,5</div>
<div class="a" style="left:424px;top:351px;width:1112px;height:1px;background:#cfcfcf;"></div>
<div class="t tt" style="left:428px;top:337.33px">28948</div>
<div class="t tt" style="left:575.7px;top:337.33px">4810213006951</div>
<div class="t tt" style="left:787.2px;top:337.33px">САЛАТ КАПУСТА ОБЫЧНАЯ 850Г LEOR 0.85кг.</div>
<div class="t tt" style="left:1195px;top:337.33px">шт.</div>
<div class="t tt" style="left:1300px;width:87.3px;text-align:right;top:337.33px">23</div>
<div class="t tt" style="left:1440px;width:92.3px;text-align:right;top:337.33px">64,4</div>
<div class="a" style="left:424px;top:368px;width:1112px;height:1px;background:#cfcfcf;"></div>
<div class="t tt" style="left:428px;top:354.33px">28949</div>
<div class="t tt" style="left:575.7px;top:354.33px">4810213002823</div>
<div class="t tt" style="left:787.2px;top:354.33px">САЛАТ КАПУСТА ПО-БЕЛОРУССКИ 380Г LEOR 0.38кг.</div>
<div class="t tt" style="left:1195px;top:354.33px">шт.</div>
<div class="t tt" style="left:1300px;width:87.3px;text-align:right;top:354.33px">7</div>
<div class="t tt" style="left:1440px;width:92.3px;text-align:right;top:354.33px">12,25</div>
<div class="a" style="left:424px;top:385px;width:1112px;height:1px;background:#cfcfcf;"></div>
<div class="t tt" style="left:428px;top:371.33px">28951</div>
<div class="t tt" style="left:575.7px;top:371.33px">4810213002830</div>
<div class="t tt" style="left:787.2px;top:371.33px">САЛАТ КАПУСТА ПО-ДОМАШНЕМУ 380Г LEOR 0.38кг.</div>
<div class="t tt" style="left:1195px;top:371.33px">шт.</div>
<div class="t tt" style="left:1300px;width:87.3px;text-align:right;top:371.33px">15</div>
<div class="t tt" style="left:1440px;width:92.3px;text-align:right;top:371.33px">26,25</div>
<div class="a" style="left:424px;top:402px;width:1112px;height:1px;background:#cfcfcf;"></div>
<div class="t tt" style="left:428px;top:388.33px">28961</div>
<div class="t tt" style="left:575.7px;top:388.33px">4810168024796</div>
<div class="t tt" style="left:787.2px;top:388.33px">САЛАТ КРАБОВЫЙ С КРЕВЕТКАМИ/АНАН 250Г САНТА БРЕМОР 0.25кг.</div>
<div class="t tt" style="left:1195px;top:388.33px">шт.</div>
<div class="t tt" style="left:1300px;width:87.3px;text-align:right;top:388.33px">4</div>
<div class="t tt" style="left:1440px;width:92.3px;text-align:right;top:388.33px">10,2</div>
<div class="a" style="left:424px;top:403px;width:1112px;height:16px;background:#eeeeff;"></div>
<div class="a" style="left:424px;top:419px;width:1112px;height:1px;background:#cfcfcf;"></div>
<div class="t tt" style="left:428px;top:405.33px">28990</div>
<div class="t tt" style="left:575.7px;top:405.33px">4810213000287</div>
<div class="t tt" style="left:787.2px;top:405.33px">САЛАТ МОРКОВЬ ПИКАНТНАЯ 250Г LEOR 0.25кг.</div>
<div class="t tt" style="left:1195px;top:405.33px">шт.</div>
<div class="t tt" style="left:1300px;width:87.3px;text-align:right;top:405.33px">34</div>
<div class="t tt" style="left:1440px;width:92.3px;text-align:right;top:405.33px">47,26</div>
<div class="a" style="left:424px;top:436px;width:1112px;height:1px;background:#cfcfcf;"></div>
<div class="t tt" style="left:428px;top:422.33px">28991</div>
<div class="t tt" style="left:575.7px;top:422.33px">4810213001949</div>
<div class="t tt" style="left:787.2px;top:422.33px">САЛАТ МОРКОВЬ ПИКАНТНАЯ 380Г LEOR 0.38кг.</div>
<div class="t tt" style="left:1195px;top:422.33px">шт.</div>
<div class="t tt" style="left:1300px;width:87.3px;text-align:right;top:422.33px">27</div>
<div class="t tt" style="left:1440px;width:92.3px;text-align:right;top:422.33px">52,65</div>
<div class="a" style="left:424px;top:453px;width:1112px;height:1px;background:#cfcfcf;"></div>
<div class="t tt" style="left:428px;top:439.33px">28992</div>
<div class="t tt" style="left:575.7px;top:439.33px">4810213002519</div>
<div class="t tt" style="left:787.2px;top:439.33px">САЛАТ МОРКОВЬ ПИКАНТНАЯ 650Г LEOR 0.65кг.</div>
<div class="t tt" style="left:1195px;top:439.33px">шт.</div>
<div class="t tt" style="left:1300px;width:87.3px;text-align:right;top:439.33px">13</div>
<div class="t tt" style="left:1440px;width:92.3px;text-align:right;top:439.33px">39,65</div>
<div class="a" style="left:424px;top:470px;width:1112px;height:1px;background:#cfcfcf;"></div>
<div class="t tt" style="left:428px;top:456.33px">28994</div>
<div class="t tt" style="left:575.7px;top:456.33px">4810213002144</div>
<div class="t tt" style="left:787.2px;top:456.33px">САЛАТ МОРКОВЬ ПИКАНТНАЯ С ГРИБАМИ Р 350Г LEOR 0.35кг.</div>
<div class="t tt" style="left:1195px;top:456.33px">шт.</div>
<div class="t tt" style="left:1300px;width:87.3px;text-align:right;top:456.33px">5</div>
<div class="t tt" style="left:1440px;width:92.3px;text-align:right;top:456.33px">9,45</div>
<div class="a" style="left:424px;top:487px;width:1112px;height:1px;background:#cfcfcf;"></div>
<div class="t tt" style="left:428px;top:473.33px">28997</div>
<div class="t tt" style="left:575.7px;top:473.33px">4810213000447</div>
<div class="t tt" style="left:787.2px;top:473.33px">САЛАТ МОРКОВЬ ПИКАНТ.С МОР.КАП. РБ 250Г LEOR 0.25кг.</div>
<div class="t tt" style="left:1195px;top:473.33px">шт.</div>
<div class="t tt" style="left:1300px;width:87.3px;text-align:right;top:473.33px">8</div>
<div class="t tt" style="left:1440px;width:92.3px;text-align:right;top:473.33px">12,72</div>
<div class="a" style="left:424px;top:504px;width:1112px;height:1px;background:#cfcfcf;"></div>
<div class="t tt" style="left:428px;top:490.33px">28998</div>
<div class="t tt" style="left:575.7px;top:490.33px">4810213005855</div>
<div class="t tt" style="left:787.2px;top:490.33px">САЛАТ МОРКОВЬ ПО-КОРЕЙСКИ 380Г LEOR 0.38кг.</div>
<div class="t tt" style="left:1195px;top:490.33px">шт.</div>
<div class="t tt" style="left:1300px;width:87.3px;text-align:right;top:490.33px">17</div>
<div class="t tt" style="left:1440px;width:92.3px;text-align:right;top:490.33px">32,13</div>
<div class="a" style="left:424px;top:521px;width:1112px;height:1px;background:#cfcfcf;"></div>
<div class="t tt" style="left:428px;top:507.33px">29086</div>
<div class="t tt" style="left:575.7px;top:507.33px">4810168001629</div>
<div class="t tt" style="left:787.2px;top:507.33px">САЛАТ ОЛИВЬЕ 150Г САНТА БРЕМОР 0.15кг.</div>
<div class="t tt" style="left:1195px;top:507.33px">шт.</div>
<div class="t tt" style="left:1300px;width:87.3px;text-align:right;top:507.33px">3</div>
<div class="t tt" style="left:1440px;width:92.3px;text-align:right;top:507.33px">3,15</div>
<div class="a" style="left:424px;top:538px;width:1112px;height:1px;background:#cfcfcf;"></div>
<div class="t tt" style="left:428px;top:524.33px">29087</div>
<div class="t tt" style="left:575.7px;top:524.33px">4810168001247</div>
<div class="t tt" style="left:787.2px;top:524.33px">САЛАТ ОЛИВЬЕ 250Г САНТА БРЕМОР 0.25кг.</div>
<div class="t tt" style="left:1195px;top:524.33px">шт.</div>
<div class="t tt" style="left:1300px;width:87.3px;text-align:right;top:524.33px">14</div>
<div class="t tt" style="left:1440px;width:92.3px;text-align:right;top:524.33px">16,66</div>
<div class="a" style="left:424px;top:555px;width:1112px;height:1px;background:#cfcfcf;"></div>
<div class="t tt" style="left:428px;top:541.33px">29089</div>
<div class="t tt" style="left:575.7px;top:541.33px">4810168036591</div>
<div class="t tt" style="left:787.2px;top:541.33px">САЛАТ ОЛИВЬЕ РБ 130Г САНТА БРЕМОР 0.13кг.</div>
<div class="t tt" style="left:1195px;top:541.33px">шт.</div>
<div class="t tt" style="left:1300px;width:87.3px;text-align:right;top:541.33px">2</div>
<div class="t tt" style="left:1440px;width:92.3px;text-align:right;top:541.33px">2,1</div>
<div class="a" style="left:424px;top:572px;width:1112px;height:1px;background:#cfcfcf;"></div>
<div class="t tt" style="left:428px;top:558.33px">29114</div>
<div class="t tt" style="left:575.7px;top:558.33px">4810213003332</div>
<div class="t tt" style="left:787.2px;top:558.33px">САЛАТ ПРИЯТНЫЙ СВЕКЛ/ЧЕСН. РБ 250Г LEOR 0.25кг.</div>
<div class="t tt" style="left:1195px;top:558.33px">шт.</div>
<div class="t tt" style="left:1300px;width:87.3px;text-align:right;top:558.33px">7</div>
<div class="t tt" style="left:1440px;width:92.3px;text-align:right;top:558.33px">9,73</div>
<div class="a" style="left:424px;top:589px;width:1112px;height:1px;background:#cfcfcf;"></div>
<div class="t tt" style="left:428px;top:575.33px">29138</div>
<div class="t tt" style="left:575.7px;top:575.33px">4810168001308</div>
<div class="t tt" style="left:787.2px;top:575.33px">САЛАТ С КОПЧЕНЫМ МЯСОМ 250Г САНТА БРЕМОР 0.25кг.</div>
<div class="t tt" style="left:1195px;top:575.33px">шт.</div>
<div class="t tt" style="left:1300px;width:87.3px;text-align:right;top:575.33px">8</div>
<div class="t tt" style="left:1440px;width:92.3px;text-align:right;top:575.33px">17,2</div>
<div class="a" style="left:424px;top:606px;width:1112px;height:1px;background:#cfcfcf;"></div>
<div class="t tt" style="left:428px;top:592.33px">29152</div>
<div class="t tt" style="left:575.7px;top:592.33px">4810213004797</div>
<div class="t tt" style="left:787.2px;top:592.33px">САЛАТ СПАРЖА ПО-КОРЕЙСКИ РБ 250Г LEOR 0.25кг.</div>
<div class="t tt" style="left:1195px;top:592.33px">шт.</div>
<div class="t tt" style="left:1300px;width:87.3px;text-align:right;top:592.33px">5</div>
<div class="t tt" style="left:1440px;width:92.3px;text-align:right;top:592.33px">14,75</div>
<div class="a" style="left:424px;top:623px;width:1112px;height:1px;background:#cfcfcf;"></div>
<div class="t tt" style="left:428px;top:609.33px">29163</div>
<div class="t tt" style="left:575.7px;top:609.33px">4810168041656</div>
<div class="t tt" style="left:787.2px;top:609.33px">САЛАТ С ШАМПИНЬОНАМИ 250Г САНТА БРЕМОР 0.25кг.</div>
<div class="t tt" style="left:1195px;top:609.33px">шт.</div>
<div class="t tt" style="left:1300px;width:87.3px;text-align:right;top:609.33px">8</div>
<div class="t tt" style="left:1440px;width:92.3px;text-align:right;top:609.33px">14,32</div>
<div class="a" style="left:424px;top:640px;width:1112px;height:1px;background:#cfcfcf;"></div>
<div class="t tt" style="left:428px;top:626.33px">29172</div>
<div class="t tt" style="left:575.7px;top:626.33px">4810213001246</div>
<div class="t tt" style="left:787.2px;top:626.33px">САЛАТ ФАНТАЗИЯ РБ 200Г LEOR 0.2кг.</div>
<div class="t tt" style="left:1195px;top:626.33px">шт.</div>
<div class="t tt" style="left:1300px;width:87.3px;text-align:right;top:626.33px">10</div>
<div class="t tt" style="left:1440px;width:92.3px;text-align:right;top:626.33px">10,9</div>
<div class="a" style="left:424px;top:657px;width:1112px;height:1px;background:#cfcfcf;"></div>
<div class="t tt" style="left:428px;top:643.33px">29173</div>
<div class="t tt" style="left:575.7px;top:643.33px">4810213002618</div>
<div class="t tt" style="left:787.2px;top:643.33px">САЛАТ ФАНТАЗИЯ РБ 650Г LEOR 0.65кг.</div>
<div class="t tt" style="left:1195px;top:643.33px">шт.</div>
<div class="t tt" style="left:1300px;width:87.3px;text-align:right;top:643.33px">8</div>
<div class="t tt" style="left:1440px;width:92.3px;text-align:right;top:643.33px">23,12</div>
<div class="a" style="left:424px;top:674px;width:1112px;height:1px;background:#cfcfcf;"></div>
<div class="t tt" style="left:428px;top:660.33px">29197</div>
<div class="t tt" style="left:575.7px;top:660.33px">4810213005565</div>
<div class="t tt" style="left:787.2px;top:660.33px">САЛАТ ЯНТАРЬ ОСТРЫЙ ЛЕОР ПЛАСТИК 350Г LEOR 0.35кг.</div>
<div class="t tt" style="left:1195px;top:660.33px">шт.</div>
<div class="t tt" style="left:1300px;width:87.3px;text-align:right;top:660.33px">14</div>
<div class="t tt" style="left:1440px;width:92.3px;text-align:right;top:660.33px">22,26</div>
<div class="a" style="left:570px;top:216px;width:1px;height:459px;background:#cfcfcf;"></div>
<div class="a" style="left:782px;top:216px;width:1px;height:459px;background:#cfcfcf;"></div>
<div class="a" style="left:1190px;top:216px;width:1px;height:459px;background:#cfcfcf;"></div>
<div class="a" style="left:1245px;top:216px;width:1px;height:459px;background:#cfcfcf;"></div>
<div class="a" style="left:1391px;top:216px;width:1px;height:459px;background:#cfcfcf;"></div>
<div class="btn" style="left:424px;top:859px;width:20px;height:20px"></div>
<div class="btn" style="left:453px;top:859px;width:20px;height:20px"></div>
<div class="btn" style="left:477px;top:859px;width:20px;height:20px"></div>
<div class="btn" style="left:501px;top:859px;width:20px;height:20px"></div>
<div class="btn" style="left:530px;top:859px;width:20px;height:20px"></div>
<div class="btn" style="left:554px;top:859px;width:20px;height:20px"></div>
<div class="btn" style="left:583px;top:859px;width:20px;height:20px"></div>
<svg class="a" style="left:424px;top:859px" width="20" height="20" viewBox="0 0 20 20"><path d="M3.3 4.2 H13.5 L9.7 8.5 V11.6 H7.1 V8.5 Z" fill="#f0f7f7" stroke="#2d4a4c" stroke-width="1.05" stroke-linejoin="round"/><path d="M4.3 4.4 H12.5 L11.6 5.5 H5.3Z" fill="#2d4a4c"/><path d="M7.3 9 H9.5 V11.4 H7.3Z" fill="#3f6163"/><path d="M8.4 9.4 V10.2" stroke="#dcecec" stroke-width="0.8"/><path d="M12.2 10.9 V15.7 M9.8 13.3 H14.6" stroke="#3a3a3a" stroke-width="0.9"/></svg>
<svg class="a" style="left:453px;top:859px" width="20" height="20" viewBox="0 0 20 20"><rect x="2.3" y="2.5" width="15.3" height="14.2" rx="0.8" fill="#fff" stroke="#9a9a9a" stroke-width="0.9"/><rect x="3.9" y="3.9" width="11.6" height="10.7" fill="#b0b0b0"/><g fill="#fff"><rect x="4.5" y="6.5" width="1.5" height="1.1" opacity="0.55"/><rect x="4.5" y="8.6" width="1.5" height="1.1" opacity="0.55"/><rect x="4.5" y="10.7" width="1.5" height="1.1" opacity="0.55"/><rect x="4.5" y="12.8" width="1.5" height="1.1" opacity="0.55"/><rect x="6.9" y="6.5" width="1.5" height="1.1" opacity="1"/><rect x="6.9" y="8.6" width="1.5" height="1.1" opacity="1"/><rect x="6.9" y="10.7" width="1.5" height="1.1" opacity="1"/><rect x="6.9" y="12.8" width="1.5" height="1.1" opacity="1"/><rect x="13.1" y="6.5" width="1.5" height="1.1" opacity="1"/><rect x="13.1" y="8.6" width="1.5" height="1.1" opacity="1"/><rect x="13.1" y="10.7" width="1.5" height="1.1" opacity="1"/><rect x="13.1" y="12.8" width="1.5" height="1.1" opacity="1"/></g><rect x="9.3" y="3.9" width="3.1" height="10.7" fill="#a2a2a2" stroke="#4a4a4a" stroke-width="0.9"/><path d="M10.2 7H11.5M10.2 9.1H11.5M10.2 11.2H11.5M10.2 13.3H11.5" stroke="#d6d6d6" stroke-width="1.1"/><path d="M2.6 16.3H17.3" stroke="#777" stroke-width="0.9"/></svg>
<svg class="a" style="left:477px;top:859px" width="20" height="20" viewBox="0 0 20 20"><path d="M7.7 4.3H16.5M7.7 9.3H16.5M7.7 14.4H16.5" stroke="#2a2a2a" stroke-width="1.1"/><g font-family="Liberation Sans" font-size="5.6" font-weight="bold" fill="#2a2a2a"><text x="2.4" y="6.6">1</text><text x="2.4" y="11.6">2</text><text x="2.4" y="16.7">3</text></g></svg>
<svg class="a" style="left:501px;top:859px" width="20" height="20" viewBox="0 0 20 20"><rect x="4.3" y="2.3" width="10.4" height="15" rx="0.8" fill="#dcdcdc" stroke="#8c8c8c" stroke-width="0.9"/><rect x="4.8" y="3.8" width="9.4" height="3.3" fill="#828282"/><rect x="5.6" y="4.9" width="7" height="1.5" fill="#a4a4a4"/><g fill="#8a8a8a"><circle cx="6.3" cy="9.4" r=".55"/><circle cx="8.3" cy="9.4" r=".55"/><circle cx="10.3" cy="9.4" r=".55"/><circle cx="12.3" cy="9.4" r=".55"/><circle cx="6.3" cy="11.4" r=".55"/><circle cx="8.3" cy="11.4" r=".55"/><circle cx="10.3" cy="11.4" r=".55"/><circle cx="6.3" cy="13.4" r=".55"/><circle cx="8.3" cy="13.4" r=".55"/><circle cx="6.3" cy="15.4" r=".55"/><circle cx="8.3" cy="15.4" r=".55"/></g><path d="M14.2 11.5V16.7M11.6 14.1H16.8" stroke="#5a5a5a" stroke-width="2.3" stroke-linecap="round"/></svg>
<svg class="a" style="left:530px;top:859px" width="20" height="20" viewBox="0 0 20 20"><path d="M3.2 9.5 Q2 9.8 2 11 V14.2 Q2 16.6 4.2 16.6 H14 Q15 16.6 15.6 15.8 L16.9 13.6 V8 L14.5 9.5Z" fill="#bdbdbd" stroke="#666" stroke-width="0.8"/><path d="M5.2 8.6 L8 3.4 Q8.3 2.9 9 2.9 H15.6 Q16.4 2.9 16 3.7 L13.6 8.6Z" fill="#f6f6f6" stroke="#8a8a8a" stroke-width="0.8"/><path d="M9 5.4H13.2M8.4 6.6H11.5" stroke="#b0b0b0" stroke-width="0.7"/><path d="M13.6 8.8 L16.4 4.2 V8.2 L14.4 9.6Z" fill="#777"/><path d="M2.4 11.2H14.4 L16.8 9.2" stroke="#f4f4f4" stroke-width="1.1" fill="none"/><path d="M2.6 13.2H14.6 L16.8 11" stroke="#8a8a8a" stroke-width="1" fill="none"/><path d="M3.2 15.8H14.2 L16.6 13.4" stroke="#3e3e3e" stroke-width="1.5" fill="none"/></svg>
<svg class="a" style="left:554px;top:859px" width="20" height="20" viewBox="0 0 20 20"><rect x="3.2" y="3.2" width="14.2" height="13.2" fill="#f2f2f2" stroke="#666" stroke-width="0.9"/><rect x="4.2" y="4.2" width="12.2" height="9.4" fill="#dedede"/><path d="M7 6.6 L13.8 12.6 M14.4 6.4 L7.4 12.8" stroke="#7c7c7c" stroke-width="1.6"/><path d="M6.2 9.6H15" stroke="#a6a6a6" stroke-width="0.8"/><path d="M3.4 16H17.2" stroke="#4e4e4e" stroke-width="1"/><path d="M3.6 3.7H17" stroke="#555" stroke-width="0.9"/></svg>
<svg class="a" style="left:583px;top:859px" width="20" height="20" viewBox="0 0 20 20"><rect x="3.6" y="3.5" width="12.6" height="12.4" fill="#fff" stroke="#0a0a0a" stroke-width="1.5"/><rect x="4.4" y="4.3" width="11" height="4.4" fill="#c9c9c9"/><rect x="8" y="4.3" width="4.2" height="10.8" fill="#c9c9c9"/><path d="M7.8 4.3V15.1M12.4 4.3V15.1M4.4 8.8H15.4" stroke="#fff" stroke-width="0.7"/><path d="M4.4 6.4H15.4" stroke="#e6e6e6" stroke-width="0.5"/><rect x="10.9" y="10.9" width="6.8" height="6.8" rx="1.4" fill="#a8a8a8"/><path d="M12.3 12.3L16.3 16.3M16.3 12.3L12.3 16.3" stroke="#fff" stroke-width="1.7"/></svg>
<div class="a" style="left:1359px;top:817px;width:178px;height:46px;border:1px solid #7b8bb3;border-bottom:1px solid #6e7ea8;background:#fff"></div>
<div class="a" style="left:1360px;top:832px;width:176px;height:14px;background:#3390ff;"></div>
<div class="t" style="left:1364.2px;top:818.18px;font-size:11.03px;">(Все)</div>
<div class="t" style="left:1364.2px;top:832.18px;font-size:11.03px;color:#fff;text-shadow:0 0 0.6px #fff;">С остатком (кол-во) (F7)</div>
<div class="t" style="left:1364.2px;top:846.18px;font-size:11.03px;">С остатком (кол-во/сумма) (F8)</div>
<div class="a" style="left:1359px;top:863px;width:178px;height:15px;border:1px solid #7b8bb3;border-top-color:#6e7ea8;background:#fff"></div>
<div class="t" style="left:1364.2px;top:864.29px;font-size:10.7px;">С остатком (кол-во) (F7)</div>
<svg class="a" style="left:1523px;top:866.5px" width="8" height="7"><path d="M0.5 0.5 H7.5 L4 6.3Z" fill="#111"/></svg>
<svg class="a" style="left:0;top:0" width="1548" height="892"><path d="M906 744 L1338 829.2" stroke="#d01f27" stroke-width="1.7" fill="none"/><path d="M1350.5 831.3 L1339.2 821.7 L1333.8 836.3Z" fill="#e41e26"/></svg>
<div class="a" style="left:414.5px;top:888px;width:1133.5px;height:4px;background:#e8e8e8;"></div>
<div class="a" style="left:1516.5px;top:890.8px;width:27px;height:2px;background:#c1c1c1;"></div>
</body></html>
